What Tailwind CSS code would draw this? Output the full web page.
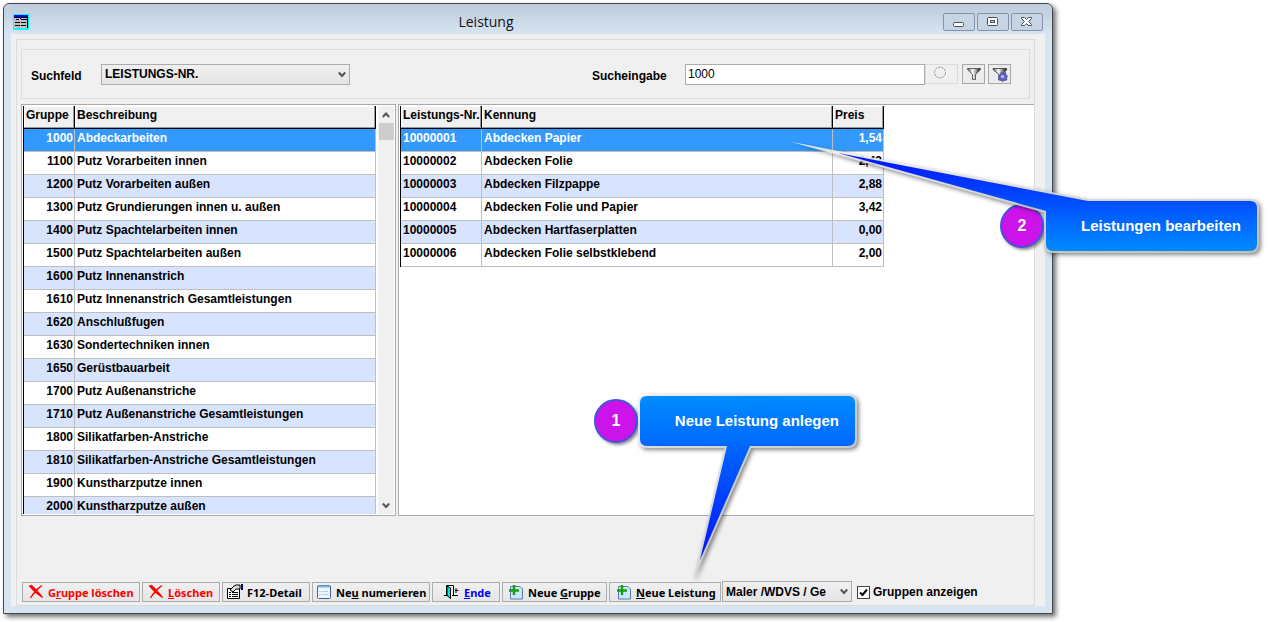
<!DOCTYPE html>
<html lang="de">
<head>
<meta charset="utf-8">
<title>Leistung</title>
<script src="https://cdn.jsdelivr.net/npm/@tailwindcss/browser@4"></script>
</head>
<body class="relative h-screen overflow-hidden bg-white pt-[3px] pr-[217px] pb-2 pl-[3px] font-['Liberation_Sans',sans-serif] text-xs font-bold text-black">

<main class="flex h-full flex-col rounded-t-md border border-[#44484c] bg-[#d7e4f1] px-[7px] pb-[7px] shadow-[3px_3px_5px_rgba(0,0,0,0.55)]">
  <header class="-mx-[7px] flex h-[30px] shrink-0 items-center rounded-t-md bg-linear-to-b from-[#bdcbda] to-[#d7e4f1] px-[9px] pt-1.5">
    <svg class="h-4 w-4 shrink-0" viewBox="0 0 16 16" shape-rendering="crispEdges">
      <rect width="16" height="16" fill="#00ffff"/><rect x="1" y="1" width="14" height="13" fill="#c0c0c0"/>
      <rect x="1" y="1" width="14" height="2" fill="#0000ff"/>
      <path d="M1 3.500H15M3 5.500H6M8 5.500H15M2 8.500H7M8 8.500H13M2 11.500H7M8 11.500H13M14.500 3V14M7.500 3V5" stroke="#000"/>
    </svg>
    <h1 class="flex-1 text-center font-['Open_Sans',sans-serif] text-sm font-normal text-[#111]">Leistung</h1>
    <div class="flex gap-0.5">
      <button aria-label="Minimieren" class="flex h-[18px] w-8 items-center justify-center rounded-xs border border-[#8392ab] bg-[#c6d4e4]">
        <svg class="h-4 w-4" viewBox="0 0 16 16"><rect x="2.500" y="8.500" width="10" height="4" rx="1" fill="#fff" stroke="#4c4c58"/></svg>
      </button>
      <button aria-label="Maximieren" class="flex h-[18px] w-8 items-center justify-center rounded-xs border border-[#8392ab] bg-[#c6d4e4]">
        <svg class="h-4 w-4" viewBox="0 0 16 16"><rect x="2.500" y="3.500" width="10" height="8" rx="1" fill="#fff" stroke="#4c4c58"/><rect x="5.500" y="6.500" width="4" height="2" fill="#c6d4e4" stroke="#4c4c58"/></svg>
      </button>
      <button aria-label="Schließen" class="flex h-[18px] w-8 items-center justify-center rounded-xs border border-[#8392ab] bg-[#c6d4e4]">
        <svg class="h-4 w-4" viewBox="0 0 16 16"><path d="M2.500 3.500H5.500L7.500 5.500 9.500 3.500H12.500V4.500L9.700 7.500 12.500 10.500V11.500H9.500L7.500 9.500 5.500 11.500H2.500V10.500L5.300 7.500 2.500 4.500Z" fill="#fff" stroke="#4c4c58"/></svg>
      </button>
    </div>
  </header>

  <div class="flex min-h-0 flex-1 flex-col bg-[#f0f0f0] pt-[5px] pr-2.5 pl-[5px]">
    <div class="flex min-h-0 flex-1 flex-col border border-[#dcdcdc] pt-[9px] pl-1">

      <form class="mr-1 flex h-[50px] shrink-0 items-center border border-[#dcdcdc] pr-[18px] pl-[9px]">
        <label for="feld" class="w-[70px] pt-1">Suchfeld</label>
        <div class="relative">
          <select id="feld" class="block h-[21px] w-[249px] appearance-none border border-[#acacac] bg-linear-to-b from-[#f0f0f0] to-[#e5e5e5] pl-[3px] text-xs leading-none font-bold"><option>LEISTUNGS-NR.</option></select>
          <svg class="pointer-events-none absolute top-[7px] right-1 h-2 w-2" viewBox="0 0 8 8"><path d="M.8 1.500 4 5 7.200 1.500" fill="none" stroke="#555" stroke-width="2"/></svg>
        </div>
        <label for="eingabe" class="ml-auto w-[93px] pt-1">Sucheingabe</label>
        <input id="eingabe" value="1000" class="h-[21px] w-[240px] border border-[#acacac] bg-white px-[2px] text-xs font-normal">
        <button type="button" disabled aria-label="Suchen" class="flex h-5 w-[33px] items-center justify-center border border-[#dadada]">
          <svg class="h-4 w-4" viewBox="0 0 16 16"><circle cx="6.500" cy="6.500" r="6" fill="none" stroke="#fff"/><circle cx="6" cy="6.500" r="5.500" fill="none" stroke="#8a8a8a" stroke-dasharray="2.500 .8"/></svg>
        </button>
        <button type="button" aria-label="Filter" class="ml-1 flex h-5 w-[23px] items-center justify-center border border-[#a8a8a8] bg-[#ececec]">
          <svg class="h-4 w-4" viewBox="0 0 16 16"><defs><linearGradient id="fg"><stop offset="0" stop-color="#555"/><stop offset=".4" stop-color="#fff"/><stop offset="1" stop-color="#111"/></linearGradient></defs><path d="M1.500 2.500H14.500V3.500L9.500 8.500V13.500H6.500V8.500L1.500 3.500Z" fill="url(#fg)" stroke="#444" stroke-width=".8"/></svg>
        </button>
        <button type="button" aria-label="Filter aufheben" class="ml-[3px] flex h-5 w-[23px] items-center justify-center border border-[#a8a8a8] bg-[#ececec]">
          <svg class="h-4 w-4" viewBox="0 0 16 16"><path d="M1 2.500H14.500V4L10 8.500V13H7V8.500L1 3.500Z" fill="url(#fg)" stroke="#333" stroke-width=".8"/><path d="M9 6.500 11 7.500 13.500 6.500 14 8.500 15.500 10 14.500 12 15 14 12.500 14.500 10.500 15.500 9 14.500 6.500 14 7 11.500 6.500 9.500 8.500 8.500Z" fill="#6262bd" stroke="#38388c" stroke-width=".6"/><circle cx="10.500" cy="10.500" r="1.600" fill="#c4c4f6"/></svg>
        </button>
      </form>

      <div class="mt-[5px] flex min-h-0 flex-1 gap-0.5">
        <section class="flex w-[375px] shrink-0 gap-0.5 border border-[#ababab] bg-white p-px">
          <div class="flex-1 overflow-hidden">
            <table class="w-full table-fixed border-separate border-spacing-0 border-l border-black leading-[18px] whitespace-nowrap [&_td]:h-[23px] [&_td]:border-r [&_td]:border-b [&_td]:border-[#bfbfbf] [&_td]:p-0 [&_td]:pl-0.5 [&_td]:align-top [&_td:first-child]:pr-px [&_td:first-child]:text-right [&_th]:h-[23px] [&_th]:border-r [&_th]:border-b [&_th]:border-black [&_th]:bg-[#f0f0f0] [&_th]:p-0 [&_th]:pl-0.5 [&_th]:text-left [&_th]:align-top [&_th]:shadow-[inset_-1px_-1px_#9a9a9a,inset_1px_1px_#fff]">
              <thead><tr><th class="w-[51px]">Gruppe</th><th>Beschreibung</th></tr></thead>
              <tbody class="[&>tr:nth-child(odd)]:bg-[#d8e3fe]">
                <tr class="bg-[#3399ff]! text-white"><td>1000</td><td>Abdeckarbeiten</td></tr>
                <tr><td>1100</td><td>Putz Vorarbeiten innen</td></tr>
                <tr><td>1200</td><td>Putz Vorarbeiten außen</td></tr>
                <tr><td>1300</td><td>Putz Grundierungen innen u. außen</td></tr>
                <tr><td>1400</td><td>Putz Spachtelarbeiten innen</td></tr>
                <tr><td>1500</td><td>Putz Spachtelarbeiten außen</td></tr>
                <tr><td>1600</td><td>Putz Innenanstrich</td></tr>
                <tr><td>1610</td><td>Putz Innenanstrich Gesamtleistungen</td></tr>
                <tr><td>1620</td><td>Anschlußfugen</td></tr>
                <tr><td>1630</td><td>Sondertechniken innen</td></tr>
                <tr><td>1650</td><td>Gerüstbauarbeit</td></tr>
                <tr><td>1700</td><td>Putz Außenanstriche</td></tr>
                <tr><td>1710</td><td>Putz Außenanstriche Gesamtleistungen</td></tr>
                <tr><td>1800</td><td>Silikatfarben-Anstriche</td></tr>
                <tr><td>1810</td><td>Silikatfarben-Anstriche Gesamtleistungen</td></tr>
                <tr><td>1900</td><td>Kunstharzputze innen</td></tr>
                <tr><td>2000</td><td>Kunstharzputze außen</td></tr>
              </tbody>
            </table>
          </div>
          <div class="flex w-4 flex-col items-center bg-[#f0f0f0]">
            <svg class="h-[17px] w-2 shrink-0" viewBox="0 0 8 17"><path d="M.8 11 4 7.500 7.200 11" fill="none" stroke="#555" stroke-width="2"/></svg>
            <div class="h-[17px] w-[15px] bg-[#cdcdcd]"></div>
            <svg class="mt-auto h-[17px] w-2 shrink-0" viewBox="0 0 8 17"><path d="M.8 6.500 4 10 7.200 6.500" fill="none" stroke="#555" stroke-width="2"/></svg>
          </div>
        </section>

        <section class="min-w-0 flex-1 overflow-hidden border-y border-l border-[#ababab] bg-white p-px">
          <table class="w-[484px] table-fixed border-separate border-spacing-0 border-l border-black leading-[18px] whitespace-nowrap [&_td]:h-[23px] [&_td]:border-r [&_td]:border-b [&_td]:border-[#bfbfbf] [&_td]:p-0 [&_td]:pl-0.5 [&_td]:align-top [&_td:last-child]:pr-px [&_td:last-child]:text-right [&_th]:h-[23px] [&_th]:border-r [&_th]:border-b [&_th]:border-black [&_th]:bg-[#f0f0f0] [&_th]:p-0 [&_th]:pl-0.5 [&_th]:text-left [&_th]:align-top [&_th]:shadow-[inset_-1px_-1px_#9a9a9a,inset_1px_1px_#fff]">
            <thead><tr><th class="w-[81px]">Leistungs-Nr.</th><th>Kennung</th><th class="w-[51px]">Preis</th></tr></thead>
            <tbody class="[&>tr:nth-child(odd)]:bg-[#d8e3fe]">
              <tr class="bg-[#3399ff]! text-white"><td>10000001</td><td>Abdecken Papier</td><td>1,54</td></tr>
              <tr><td>10000002</td><td>Abdecken Folie</td><td>2,43</td></tr>
              <tr><td>10000003</td><td>Abdecken Filzpappe</td><td>2,88</td></tr>
              <tr><td>10000004</td><td>Abdecken Folie und Papier</td><td>3,42</td></tr>
              <tr><td>10000005</td><td>Abdecken Hartfaserplatten</td><td>0,00</td></tr>
              <tr><td>10000006</td><td>Abdecken Folie selbstklebend</td><td>2,00</td></tr>
            </tbody>
          </table>
        </section>
      </div>

      <footer class="mt-[65px] mb-[3px] ml-px flex h-[21px] shrink-0 items-end gap-0.5 whitespace-nowrap [&>button]:flex [&>button]:h-5 [&>button]:items-center [&>button]:gap-1 [&>button]:border [&>button]:border-[#acacac] [&>button]:bg-linear-to-b [&>button]:from-[#f0f0f0] [&>button]:to-[#e6e6e6] [&>button]:font-['Noto_Sans',sans-serif] [&>button]:text-[11px] [&>button>span]:pt-0.5 [&>button>svg]:shrink-0">
        <button class="w-[118px] pl-[5px] text-[#ff0000]">
          <svg class="h-4 w-4" viewBox="0 0 16 16"><path d="M1.500 2 3.500 1.500Q8.500 6 14.500 13.500Q7.500 9 1.500 2M14 1.500Q7 6 2.500 14" fill="#f00" stroke="#f00" stroke-width="1.300"/></svg>
          <span>G<u>r</u>uppe löschen</span></button>
        <button class="w-[78px] pl-[5px] text-[#ff0000]">
          <svg class="h-4 w-4" viewBox="0 0 16 16"><path d="M1.500 2 3.500 1.500Q8.500 6 14.500 13.500Q7.500 9 1.500 2M14 1.500Q7 6 2.500 14" fill="#f00" stroke="#f00" stroke-width="1.300"/></svg>
          <span><u>L</u>öschen</span></button>
        <button class="w-[88px] pl-1">
          <svg class="h-4 w-4" viewBox="0 0 16 16"><path d="M.5 4.500H12.500V14.500H.5Z" fill="#fff" stroke="#000"/><path d="M2 8.500H4M5 8.500H11M2 10.500H4M5 10.500H11M2 12.500H4M5 12.500H11" stroke="#000"/><path d="M3 6 7 2 9 1H13V5L9 5 6 8Z" fill="#ddd" stroke="#000"/><path d="M14 0H16V6H14Z" fill="#000080"/></svg>
          <span>F12-Detail</span></button>
        <button class="w-[118px] pl-[3px]">
          <svg class="h-4 w-4" viewBox="0 0 16 16"><rect x="1.500" y="1.500" width="13" height="13" rx="1" fill="#eef5fc" stroke="#42658f"/><path d="M2 2.500H14" stroke="#7eb2e6" stroke-width="2"/><path d="M3 7.500H5M6 7.500H12M3 10.500H5M6 10.500H12" stroke="#b7cbe0"/></svg>
          <span>Ne<u>u</u> numerieren</span></button>
        <button class="w-[68px] pl-[11px] text-[#0000ff]">
          <svg class="h-4 w-4" viewBox="0 0 16 16"><path d="M2.500 12V1.500H9.500V12M0 11.500H5M8 11.500H14M11 6.500H14.500M12 4V9" fill="none" stroke="#000"/><path d="M3 2 6.500 4V14.500L3 11.500Z" fill="#00e5e5" stroke="#000"/></svg>
          <span><u>E</u>nde</span></button>
        <button class="w-[105px] pl-[5px]">
          <svg class="h-4 w-4" viewBox="0 0 16 16"><path d="M2.500 2.500H12L14.500 5V15H2.500Z" fill="#cde6fb" stroke="#5a7ba8"/><path d="M1 6.500H11M6 1V11" stroke="#16a010" stroke-width="2.500"/></svg>
          <span>Neue <u>G</u>ruppe</span></button>
        <button class="w-[112px] pl-1.5">
          <svg class="h-4 w-4" viewBox="0 0 16 16"><path d="M2.500 2.500H12L14.500 5V15H2.500Z" fill="#cde6fb" stroke="#5a7ba8"/><path d="M1 6.500H11M6 1V11" stroke="#16a010" stroke-width="2.500"/></svg>
          <span><u>N</u>eue Leistung</span></button>
        <div class="relative -ml-px">
          <select aria-label="Gewerk" class="block h-[21px] w-[130px] appearance-none border border-[#acacac] bg-linear-to-b from-[#f0f0f0] to-[#e5e5e5] pr-5 pl-[3px] text-xs leading-none font-bold"><option>Maler /WDVS / Ge</option></select>
          <svg class="pointer-events-none absolute top-[7px] right-1 h-2 w-2" viewBox="0 0 8 8"><path d="M.8 1.500 4 5 7.200 1.500" fill="none" stroke="#555" stroke-width="2"/></svg>
        </div>
        <label class="ml-[3px] flex h-5 items-center gap-[3px]">
          <span class="relative h-[13px] w-[13px]">
            <input type="checkbox" checked class="block h-[13px] w-[13px] appearance-none border border-[#444] bg-white">
            <svg class="pointer-events-none absolute inset-0" viewBox="0 0 13 13"><path d="M3 6.500 5.500 9 10 3.500" fill="none" stroke="#000" stroke-width="2"/></svg>
          </span>
          Gruppen anzeigen</label>
      </footer>
    </div>
  </div>
</main>

<!-- Step markers and callouts floating over the window -->
<div class="absolute top-[399px] left-[594px] flex h-11 w-11 items-center justify-center rounded-full border-2 border-[#4353dc] bg-[#cc14ea] text-base text-white shadow-[2px_2px_3px_rgba(0,0,0,0.45)]">1</div>
<div class="absolute top-[204px] left-[1000px] flex h-11 w-11 items-center justify-center rounded-full border-2 border-[#4353dc] bg-[#cc14ea] text-base text-white shadow-[2px_2px_3px_rgba(0,0,0,0.45)]">2</div>
<svg class="pointer-events-none absolute top-0 left-0 h-[622px] w-[1270px] drop-shadow-[2px_2px_2px_rgba(0,0,0,0.5)]" viewBox="0 0 1270 622">
  <defs>
    <linearGradient id="c1" gradientUnits="userSpaceOnUse" x1="0" y1="396" x2="0" y2="560"><stop offset="0" stop-color="#008cff"/><stop offset=".3" stop-color="#0068ff"/><stop offset="1" stop-color="#0010ff"/></linearGradient>
    <linearGradient id="c2" gradientUnits="userSpaceOnUse" x1="0" y1="251" x2="0" y2="153"><stop offset="0" stop-color="#008cff"/><stop offset="1" stop-color="#0010ff"/></linearGradient>
    <linearGradient id="edge" x1="0" y1="0" x2="1" y2="1"><stop offset="0" stop-color="#f4f4f4"/><stop offset=".5" stop-color="#d8d8d8"/><stop offset="1" stop-color="#c8c8c8"/></linearGradient>
  </defs>
  <g stroke="url(#edge)" stroke-width="4" stroke-opacity=".85" stroke-miterlimit="40" paint-order="stroke">
    <path fill="url(#c1)" d="M647 396H848Q855 396 855 403V439Q855 446 848 446H750L700 560 727 446H647Q640 446 640 439V403Q640 396 647 396Z"/>
    <path fill="url(#c2)" d="M1088 201H1250Q1257 201 1257 208V244Q1257 251 1250 251H1053Q1046 251 1046 244V211L838 153Z"/>
  </g>
</svg>
<p class="absolute top-[396px] left-[640px] flex h-[50px] w-[215px] items-center justify-end pr-4 text-[15px] whitespace-nowrap text-white">Neue Leistung anlegen</p>
<p class="absolute top-[201px] left-[1046px] flex h-[50px] w-[211px] items-center justify-end pr-4 text-[15px] whitespace-nowrap text-white">Leistungen bearbeiten</p>
</body>
</html>
